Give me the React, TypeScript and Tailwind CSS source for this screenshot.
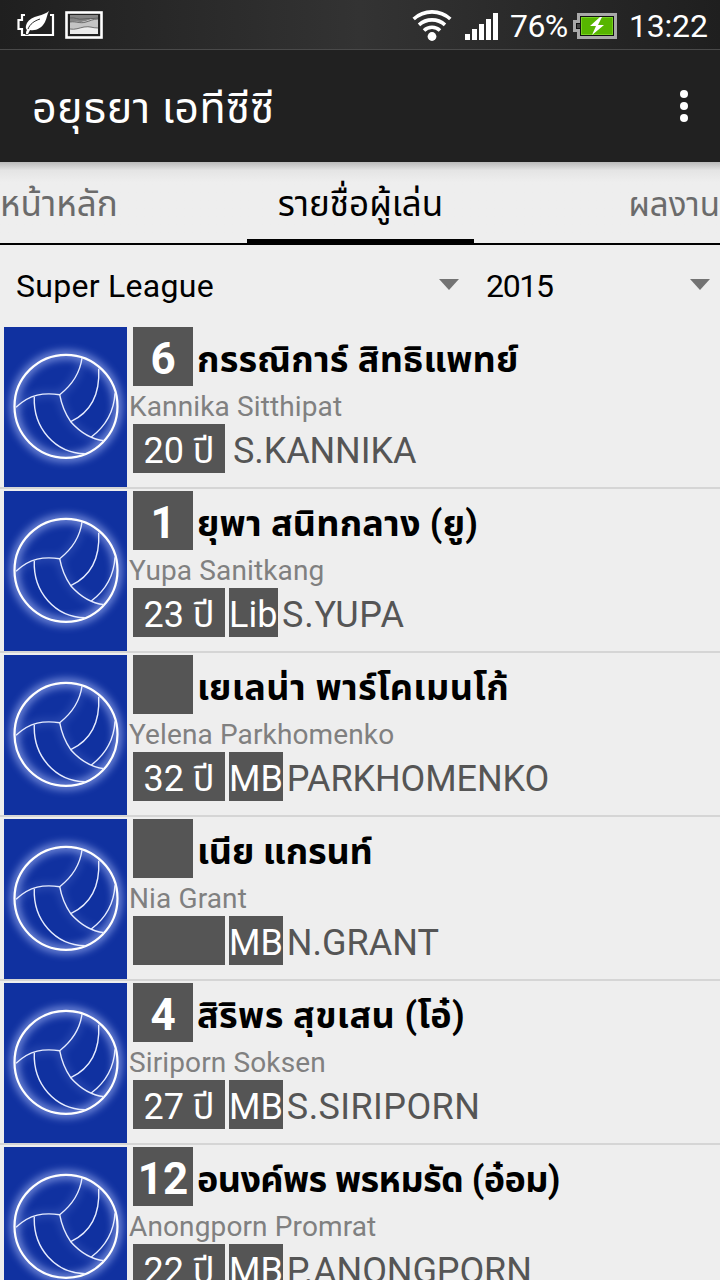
type Player = {
  no: string
  name: string
  nameClass: string
  latin: string
  age: string
  position: string
  shirt: string
  shirtClass: string
}

const players: Player[] = [
  { no: "6", name: "กรรณิการ์ สิทธิแพทย์", nameClass: "tracking-[0.2px]", latin: "Kannika Sitthipat", age: "20 ปี", position: "", shirt: "S.KANNIKA", shirtClass: "tracking-[-0.1px]" },
  { no: "1", name: "ยุพา สนิทกลาง (ยู)", nameClass: "tracking-[0.2px]", latin: "Yupa Sanitkang", age: "23 ปี", position: "Lib", shirt: "S.YUPA", shirtClass: "tracking-[0.8px]" },
  { no: "", name: "เยเลน่า พาร์โคเมนโก้", nameClass: "tracking-[0.4px]", latin: "Yelena Parkhomenko", age: "32 ปี", position: "MB", shirt: "PARKHOMENKO", shirtClass: "tracking-[-0.1px]" },
  { no: "", name: "เนีย แกรนท์", nameClass: "tracking-[-0.2px]", latin: "Nia Grant", age: "", position: "MB", shirt: "N.GRANT", shirtClass: "tracking-normal" },
  { no: "4", name: "สิริพร สุขเสน (โอ๋)", nameClass: "tracking-[0.4px]", latin: "Siriporn Soksen", age: "27 ปี", position: "MB", shirt: "S.SIRIPORN", shirtClass: "tracking-[0.4px]" },
  { no: "12", name: "อนงค์พร พรหมรัด (อ๋อม)", nameClass: "tracking-[-0.6px]", latin: "Anongporn Promrat", age: "22 ปี", position: "MB", shirt: "P.ANONGPORN", shirtClass: "tracking-[-0.1px]" },
]

function PowerSaverIcon() {
  return (
    <svg width="40" height="28" viewBox="0 0 40 28" className="shrink-0">
      <path d="M9 4H6v5H2.500v9H6v6h31V4h-3" fill="none" stroke="#fff" strokeWidth="2.200" />
      <path
        d="M33 0C29 5 15 4 11 12c-2 4-1 6 0 7-1 1-1 3-1 4l2 0 2-4c6 1 12-2 15-8 2-4 2-8 4-11z"
        fill="#fff"
        stroke="#262626"
        strokeWidth="1.600"
        paintOrder="stroke"
      />
      <path d="M12 18c2-5 6-8 12-10" fill="none" stroke="#2a2a2a" strokeWidth="1" />
    </svg>
  )
}

function GalleryIcon() {
  return (
    <svg width="38" height="28" viewBox="0 0 38 28" className="shrink-0">
      <rect x="1.500" y="1.500" width="35" height="25" fill="#222" stroke="#fff" strokeWidth="2.600" />
      <rect x="5" y="4" width="28" height="19" fill="#ececec" />
      <path d="M5 4h28v4c-5-1-8 1-12 2-6 2-10 0-16 1z" fill="#858585" />
      <path d="M5 11c6-1 10 1 16-1 4-1 7-3 12-2v9c-6 0-8-2-14-1-5 1-9 3-14 2z" fill="#c4c4c4" />
      <path d="M5 7c5-1 8 2 13 1 6-1 9 0 15-1M5 11c6-1 10 2 16 0 4-1 7-3 12-3M5 18c5 1 9-1 14-2 6-1 8 1 14 1" fill="none" stroke="#555" strokeWidth=".8" />
    </svg>
  )
}

function WifiIcon() {
  return (
    <svg width="40" height="32" viewBox="0 0 40 32" className="shrink-0">
      <g fill="none" stroke="#fff" strokeWidth="3.600">
        <path d="M1.700 10a27 27 0 0 1 36.600 0" />
        <path d="M7 15.800a19.500 19.500 0 0 1 26 0" />
        <path d="M12 21.500a11.500 11.500 0 0 1 16 0" />
      </g>
      <circle cx="20" cy="27.500" r="4.400" fill="#fff" />
    </svg>
  )
}

function SignalIcon() {
  return (
    <svg width="33" height="27" viewBox="0 0 33 27" className="shrink-0">
      <path d="M0 21h5v6H0zM7 16h5v11H7zM14 11h5v16h-5zM21 6h5v21h-5zM28 0h5v27h-5z" fill="#fff" />
    </svg>
  )
}

function BatteryIcon() {
  return (
    <svg width="44" height="26" viewBox="0 0 44 26" className="shrink-0">
      <path d="M4 0h40v26H4v-7H0V7h4z" fill="#a9a9a9" />
      <path d="M7 3h34v20H7v-7H3v-6h4z" fill="#111" />
      <path d="M4 11h3v4H4z" fill="#444" />
      <rect x="8.500" y="4.500" width="31" height="17" fill="#57b500" stroke="#79d321" />
      <path d="M27 4l-10 9h6l-4 9 12-10h-6l4-8z" fill="#fff" />
    </svg>
  )
}

function Volleyball() {
  return (
    <svg width="123" height="160" viewBox="0 0 123 160" className="block shrink-0 bg-[#1031a0]">
      <defs>
        <filter id="glow" x="-30%" y="-30%" width="160%" height="160%">
          <feGaussianBlur stdDeviation="4" />
        </filter>
      </defs>
      <circle cx="62" cy="79.300" r="51.500" fill="none" stroke="#b4c4ff" strokeWidth="7" opacity=".75" filter="url(#glow)" />
      <g fill="none" stroke="#8fa6f0" strokeWidth="4" opacity=".35" filter="url(#glow)">
        <path d="M78 31C76 46 68 58 55.700 67.700C40 65.500 26 67 12 80.300" />
        <path d="M55.700 67.700C59 91 76 110 100 113.700" />
      </g>
      <circle cx="62" cy="79.300" r="51.500" fill="none" stroke="#fff" strokeWidth="2.200" />
      <g fill="none" stroke="#e6ecff" strokeWidth="1.400">
        <path d="M78 31C76 46 68 58 55.700 67.700C40 65.500 26 67 12 80.300" />
        <path d="M55.700 67.700C58 80 62 88 66.700 94.700C75 104 86 112 100 113.700" />
        <path d="M94.700 41.700C96 66 87 85 66.700 94.700" />
        <path d="M111 66.300C110 84 102 99 87.300 110" />
        <path d="M30.300 69.700C29 101 51 126 81 126.700" />
      </g>
    </svg>
  )
}

function StatusBar() {
  return (
    <div className="flex h-[50px] items-start border-b border-[#4a4a4a] bg-gradient-to-r from-[#1f1f1f] via-[#333] to-[#1f1f1f] text-[32px] leading-[52px] text-white">
      <div className="flex flex-1 gap-[9px] pt-[11px] pl-4">
        <PowerSaverIcon />
        <GalleryIcon />
      </div>
      <div className="flex items-start pr-3">
        <div className="pt-[9px]"><WifiIcon /></div>
        <div className="ml-[13px] pt-[13px]"><SignalIcon /></div>
        <span className="ml-3 w-[59px] whitespace-nowrap tracking-[-0.6px]">76%</span>
        <div className="ml-1 pt-[13px]"><BatteryIcon /></div>
        <span className="ml-3 w-[79px] whitespace-nowrap tracking-[-0.2px]">13:22</span>
      </div>
    </div>
  )
}

function Header() {
  return (
    <header className="flex h-28 items-center justify-between bg-[#212121] pl-8 pr-8 text-white">
      <h1 className="whitespace-nowrap pt-[3px] text-[43px] leading-[56px] tracking-[0.4px]">อยุธยา เอทีซีซี</h1>
      <div className="flex flex-col gap-1">
        <span className="size-2 rounded-full bg-white" />
        <span className="size-2 rounded-full bg-white" />
        <span className="size-2 rounded-full bg-white" />
      </div>
    </header>
  )
}

function Tabs() {
  return (
    <nav className="flex h-[83px] justify-between whitespace-nowrap border-b-2 border-black bg-gradient-to-b from-[#bbb] via-[#e4e4e4] via-10% to-[#eee] to-25% text-[35px] leading-[86px] text-[#6b6b6b]">
      <span className="w-[247px]">หน้าหลัก</span>
      <span className="h-[81px] w-[227px] border-b-4 border-black text-center text-black">รายชื่อผู้เล่น</span>
      <span className="w-[246px] text-right text-[33px]">ผลงาน</span>
    </nav>
  )
}

function Arrow() {
  return (
    <svg width="20" height="11" viewBox="0 0 20 11" className="mb-[2px] shrink-0">
      <path d="M0 0h20L10 11z" fill="#737373" />
    </svg>
  )
}

function Filters() {
  return (
    <div className="flex h-20 items-center text-[32px] text-black">
      <div className="flex w-[470px] items-center justify-between pl-4 pr-[11px]">
        <span className="pt-[2px] tracking-[0.28px]">Super League</span>
        <Arrow />
      </div>
      <div className="flex flex-1 items-center justify-between pl-4 pr-[10px]">
        <span className="pt-[2px] tracking-[-1.300px]">2015</span>
        <Arrow />
      </div>
    </div>
  )
}

function PlayerRow({ player }: { player: Player }) {
  return (
    <li className="flex h-[164px] border-b-2 border-[#d5d5d5] pt-[2px] pl-1 whitespace-nowrap">
      <Volleyball />
      <div className="ml-[2px]">
        <div className="flex h-[59px] pl-1">
          <span className="w-[60px] bg-[#555] text-center text-[44px] font-bold leading-[64px] text-white">{player.no}</span>
          <span className={`ml-1 text-[36px] font-bold leading-[66px] text-black ${player.nameClass}`}>{player.name}</span>
        </div>
        <div className="h-[38px] text-[28px] leading-[42px] tracking-[0.13px] text-[#808080]">{player.latin}</div>
        <div className="flex h-[49px] gap-1 pl-1 text-[36px] leading-[54px]">
          <span className="w-[92px] bg-[#555] text-center text-white">{player.age}</span>
          <span className={player.position === "Lib" ? "w-[49px] bg-[#555] text-white" : "bg-[#555] text-white"}>{player.position}</span>
          <span className={`text-[#555] ${player.shirtClass}`}>{player.shirt}</span>
        </div>
      </div>
    </li>
  )
}

export default function App() {
  return (
    <div className="h-[1280px] w-[720px] overflow-hidden bg-[#eee] font-[Roboto,'Noto_Sans_Thai',sans-serif]">
      <StatusBar />
      <Header />
      <Tabs />
      <Filters />
      <ul>
        {players.map((player) => (
          <PlayerRow key={player.latin} player={player} />
        ))}
      </ul>
    </div>
  )
}
